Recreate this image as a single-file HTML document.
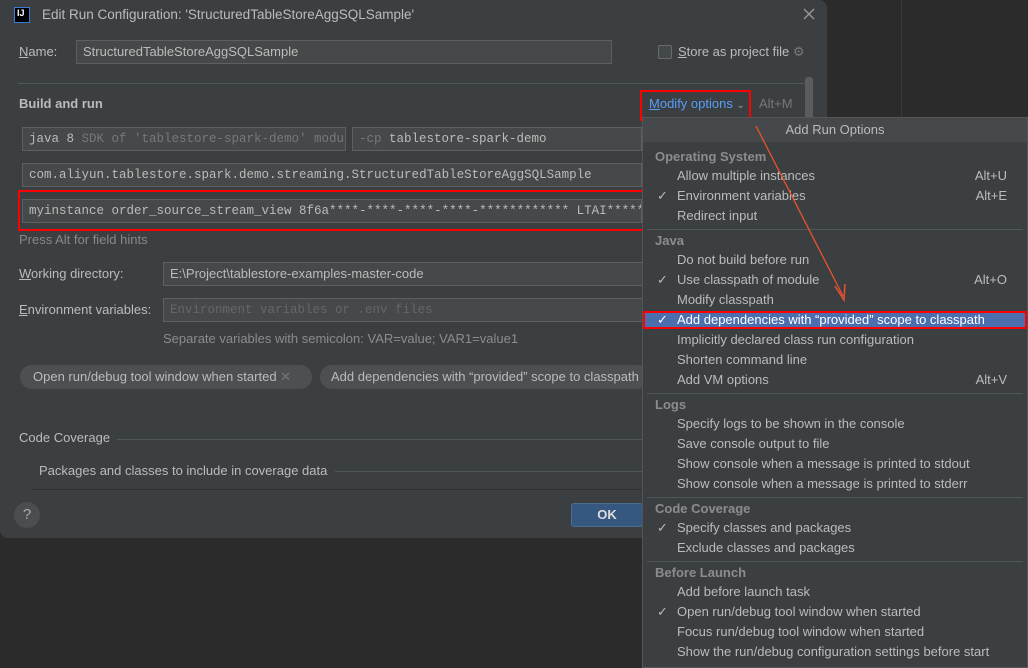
<!DOCTYPE html>
<html><head><meta charset="utf-8"><style>
*{margin:0;padding:0;box-sizing:border-box}
body{width:1028px;height:668px;background:#2b2b2b;position:relative;overflow:hidden;font-family:"Liberation Sans",sans-serif;font-size:13px;color:#bbbbbb}
.a{position:absolute;white-space:nowrap}
.dlg{position:absolute;left:0;top:0;width:827px;height:538px;background:#3c3f41;border-radius:0 8px 8px 8px}
.fld{position:absolute;background:#45494a;border:1px solid #5e6060;height:24px;line-height:22px;padding-left:6px;white-space:nowrap;overflow:hidden;font-family:"Liberation Mono",monospace;font-size:12.5px;color:#bbbbbb}
.lbl{line-height:16px}
.pop{position:absolute;left:642px;top:117px;width:386px;height:551px;background:#3c3f41;border:1px solid #555}
.hd{position:absolute;left:12px;font-weight:bold;color:#8c8c8c}
.it{position:absolute;left:34px;color:#bbbbbb}
.ck{position:absolute;left:14px;color:#bbbbbb}
.sc{position:absolute;right:20px;color:#bbbbbb}
.sep{position:absolute;left:4px;right:4px;height:1px;background:#515658}
</style></head><body>
<div class="a" style="left:901px;top:0;width:1px;height:668px;background:#3a3a3a"></div>
<div class="dlg">
 <div class="a" style="left:14px;top:7px;width:16px;height:16px;background:#000;border:1px solid #3d7bd6;color:#fff;font-size:9px;font-weight:bold;line-height:10px;padding-left:2px">IJ</div>
 <div class="a" style="left:42px;top:7px;font-size:13.5px">Edit Run Configuration: 'StructuredTableStoreAggSQLSample'</div>
 <svg class="a" style="left:803px;top:8px" width="12" height="12"><path d="M1 1L11 11M11 1L1 11" stroke="#999" stroke-width="1.3"/></svg>
 <div class="a lbl" style="left:19px;top:44px"><u>N</u>ame:</div>
 <div class="fld" style="left:76px;top:40px;width:536px;font-family:'Liberation Sans',sans-serif;font-size:13px">StructuredTableStoreAggSQLSample</div>
 <div class="a" style="left:658px;top:45px;width:14px;height:14px;border:1px solid #6b6b6b;border-radius:2px;background:#43494a"></div>
 <div class="a lbl" style="left:678px;top:44px"><u>S</u>tore as project file <span style="color:#777">⚙</span></div>
 <div class="a" style="left:18px;top:83px;width:793px;height:1px;background:#515658"></div>
 <div class="a" style="left:805px;top:77px;width:8px;height:60px;background:#5a5d5f;border-radius:3px"></div>
 <div class="a lbl" style="left:19px;top:96px;font-weight:bold">Build and run</div>
 <div class="a lbl" style="left:649px;top:96px;color:#589df6"><u>M</u>odify options <span style="color:#999;font-size:10px">⌄</span></div>
 <div class="a lbl" style="left:759px;top:96px;color:#777">Alt+M</div>
 <div class="a" style="left:640px;top:90px;width:111px;height:31px;border:2px solid #ff0000"></div>
 <div class="fld" style="left:22px;top:127px;width:324px">java 8 <span style="color:#787878">SDK of 'tablestore-spark-demo' modu</span> <span style="color:#aaa;font-size:10px">▼</span></div>
 <div class="fld" style="left:352px;top:127px;width:290px"><span style="color:#787878">-cp</span> tablestore-spark-demo</div>
 <div class="fld" style="left:22px;top:163px;width:620px">com.aliyun.tablestore.spark.demo.streaming.StructuredTableStoreAggSQLSample</div>
 <div class="fld" style="left:22px;top:199px;width:620px">myinstance order_source_stream_view 8f6a****-****-****-****-************ LTAI************</div>
 <div class="a" style="left:18px;top:190px;width:626px;height:41px;border:2px solid #ff0000"></div>
 <div class="a lbl" style="left:19px;top:232px;color:#888">Press Alt for field hints</div>
 <div class="a lbl" style="left:19px;top:266px"><u>W</u>orking directory:</div>
 <div class="fld" style="left:163px;top:262px;width:480px;font-family:'Liberation Sans',sans-serif;font-size:13px">E:\Project\tablestore-examples-master-code</div>
 <div class="a lbl" style="left:19px;top:302px"><u>E</u>nvironment variables:</div>
 <div class="fld" style="left:163px;top:298px;width:480px;color:#666">Environment variables or .env files</div>
 <div class="a lbl" style="left:163px;top:331px;color:#8c8c8c">Separate variables with semicolon: VAR=value; VAR1=value1</div>
 <div class="a" style="left:20px;top:365px;width:292px;height:24px;border-radius:12px;background:#4c5052;padding:4px 0 0 13px">Open run/debug tool window when started <span style="color:#777">✕</span></div>
 <div class="a" style="left:320px;top:365px;width:330px;height:24px;border-radius:12px;background:#4c5052;padding:4px 0 0 11px;overflow:hidden">Add dependencies with “provided” scope to classpath</div>
 <div class="a lbl" style="left:19px;top:430px">Code Coverage</div>
 <div class="a" style="left:117px;top:439px;width:525px;height:1px;background:#515658"></div>
 <div class="a lbl" style="left:39px;top:463px">Packages and classes to include in coverage data</div>
 <div class="a" style="left:335px;top:471px;width:307px;height:1px;background:#515658"></div>
 <div class="a" style="left:31px;top:489px;width:611px;height:1px;background:#2f3133"></div>
 <div class="a" style="left:14px;top:502px;width:26px;height:26px;border-radius:13px;background:#4a4e50;text-align:center;line-height:26px;color:#aaa;font-size:15px">?</div>
 <div class="a" style="left:571px;top:503px;width:72px;height:24px;border-radius:3px;background:#365880;border:1px solid #4c708c;text-align:center;line-height:22px;font-weight:bold;color:#ddd">OK</div>
</div>
<div class="pop">
 <div class="a" style="left:0;top:0;width:384px;height:24px;background:#45494b;text-align:center;line-height:24px;color:#bbb">Add Run Options</div>
 <div class="hd" style="top:31px">Operating System</div>
 <div class="it" style="top:50px">Allow multiple instances</div><div class="sc" style="top:50px">Alt+U</div>
 <div class="ck" style="top:70px">✓</div><div class="it" style="top:70px">Environment variables</div><div class="sc" style="top:70px">Alt+E</div>
 <div class="it" style="top:90px">Redirect input</div>
 <div class="sep" style="top:111px"></div>
 <div class="hd" style="top:115px">Java</div>
 <div class="it" style="top:134px">Do not build before run</div>
 <div class="ck" style="top:154px">✓</div><div class="it" style="top:154px">Use classpath of module</div><div class="sc" style="top:154px">Alt+O</div>
 <div class="it" style="top:174px">Modify classpath</div>
 <div class="a" style="left:0;top:193px;width:384px;height:18px;background:#4b6eaf;border:2px solid #ff0000"></div>
 <div class="ck" style="top:194px;color:#fff">✓</div><div class="it" style="top:194px;color:#fff">Add dependencies with “provided” scope to classpath</div>
 <div class="it" style="top:214px">Implicitly declared class run configuration</div>
 <div class="it" style="top:234px">Shorten command line</div>
 <div class="it" style="top:254px">Add VM options</div><div class="sc" style="top:254px">Alt+V</div>
 <div class="sep" style="top:275px"></div>
 <div class="hd" style="top:279px">Logs</div>
 <div class="it" style="top:298px">Specify logs to be shown in the console</div>
 <div class="it" style="top:318px">Save console output to file</div>
 <div class="it" style="top:338px">Show console when a message is printed to stdout</div>
 <div class="it" style="top:358px">Show console when a message is printed to stderr</div>
 <div class="sep" style="top:379px"></div>
 <div class="hd" style="top:383px">Code Coverage</div>
 <div class="ck" style="top:402px">✓</div><div class="it" style="top:402px">Specify classes and packages</div>
 <div class="it" style="top:422px">Exclude classes and packages</div>
 <div class="sep" style="top:443px"></div>
 <div class="hd" style="top:447px">Before Launch</div>
 <div class="it" style="top:466px">Add before launch task</div>
 <div class="ck" style="top:486px">✓</div><div class="it" style="top:486px">Open run/debug tool window when started</div>
 <div class="it" style="top:506px">Focus run/debug tool window when started</div>
 <div class="it" style="top:526px">Show the run/debug configuration settings before start</div>
</div>
<svg class="a" style="left:0;top:0" width="1028" height="668"><line x1="756" y1="126" x2="843" y2="296" stroke="#e8522c" stroke-width="1.3"/><path d="M835 286 L844 300 L845 284" fill="none" stroke="#e8522c" stroke-width="1.5"/></svg>
</body></html>
